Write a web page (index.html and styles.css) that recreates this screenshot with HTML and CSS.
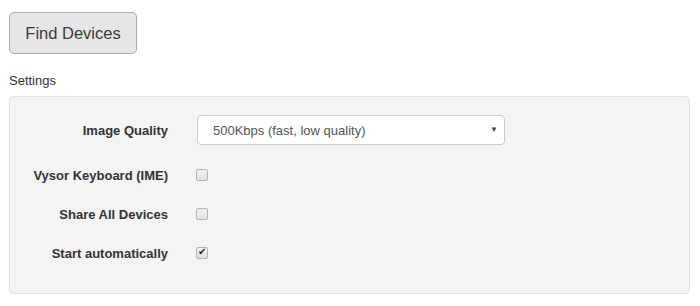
FILE: index.html
```html
<!DOCTYPE html>
<html lang="en">
<head>
    <meta charset="UTF-8">
    <title>Vysor Settings</title>
    <link rel="stylesheet" href="styles.css">
</head>
<body>
    <div class="page">
        <button class="find-btn">Find Devices</button>
        <div class="section-title">Settings</div>
        <div class="well">
            <div class="form-row first">
                <label class="row-label" for="quality">Image Quality</label>
                <div class="select-wrap">
                    <select id="quality" class="select">
                        <option>500Kbps (fast, low quality)</option>
                        <option>1Mbps</option>
                        <option>2Mbps</option>
                    </select>
                    <span class="caret">&#9660;</span>
                </div>
            </div>
            <div class="form-row">
                <label class="row-label" for="ime">Vysor Keyboard (IME)</label>
                <input type="checkbox" id="ime" class="check">
            </div>
            <div class="form-row">
                <label class="row-label" for="share">Share All Devices</label>
                <input type="checkbox" id="share" class="check">
            </div>
            <div class="form-row">
                <label class="row-label" for="auto">Start automatically</label>
                <input type="checkbox" id="auto" class="check" checked>
            </div>
        </div>
    </div>
</body>
</html>
```

FILE: styles.css
```css
body {
    margin: 0;
    padding: 0;
    background-color: #fff;
    font-family: "Liberation Sans", Arial, sans-serif;
    color: #333;
}
.page {
    padding: 12px 10px 0 9px;
}
.find-btn {
    display: block;
    width: 128px;
    height: 42px;
    padding: 0;
    font-family: "Liberation Sans", Arial, sans-serif;
    font-size: 16.5px;
    color: #3a3a3a;
    background-color: #e6e6e6;
    border: 1px solid #adadad;
    border-radius: 5px;
    cursor: pointer;
}
.section-title {
    margin-top: 19px;
    font-size: 13px;
    line-height: 15px;
    color: #333;
}
.well {
    box-sizing: border-box;
    margin-top: 8px;
    width: 681px;
    height: 198px;
    padding: 18px 0 0 0;
    background-color: #f4f4f4;
    border: 1px solid #e3e3e3;
    border-radius: 4px;
    display: flex;
    flex-direction: column;
    gap: 19px;
}
.form-row {
    display: flex;
    align-items: center;
    height: 20px;
}
.form-row.first {
    height: 30px;
    margin-bottom: 1px;
}
.row-label {
    width: 158px;
    text-align: right;
    font-size: 13px;
    font-weight: bold;
    color: #333;
}
.select-wrap {
    position: relative;
    margin-left: 29px;
}
.select {
    display: block;
    box-sizing: border-box;
    width: 308px;
    height: 30px;
    padding: 0 0 0 15px;
    font-family: "Liberation Sans", Arial, sans-serif;
    font-size: 13px;
    color: #555;
    background-color: #fff;
    border: 1px solid #ccc;
    border-radius: 4px;
    appearance: none;
    -webkit-appearance: none;
}
.caret {
    position: absolute;
    right: 7px;
    top: 10px;
    font-size: 8px;
    color: #444;
    pointer-events: none;
}
.check {
    appearance: none;
    -webkit-appearance: none;
    box-sizing: border-box;
    width: 12px;
    height: 12px;
    margin: 0 0 0 28px;
    border: 1px solid #b4b4b4;
    border-radius: 2px;
    background: linear-gradient(#f2f2f2, #e0e0e0);
    position: relative;
}
.check:checked::after {
    content: "\2714";
    position: absolute;
    left: 1px;
    top: -2px;
    font-size: 10px;
    color: #222;
}
```
